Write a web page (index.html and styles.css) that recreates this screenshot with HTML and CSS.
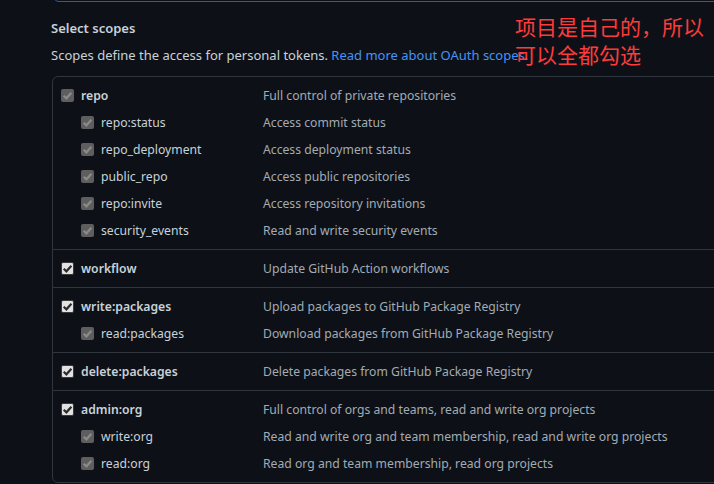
FILE: index.html
```html
<!DOCTYPE html>
<html lang="en">
<head>
<meta charset="utf-8">
<link rel="stylesheet" href="styles.css">
</head>
<body>
<div class="page">
  <div class="input"></div>
  <h3 class="title">Select scopes</h3>
  <p class="note">Scopes define the access for personal tokens. <a href="#">Read more about OAuth scopes.</a></p>
  <div class="box">
    <div class="group">
      <div class="row"><span class="cb dis"><svg viewBox="0 0 12 12"><path d="M2.5 6.2 L5 8.6 L9.6 3.4"/></svg></span><span class="name strong">repo</span><span class="desc">Full control of private repositories</span></div>
      <div class="row child"><span class="cb dis"><svg viewBox="0 0 12 12"><path d="M2.5 6.2 L5 8.6 L9.6 3.4"/></svg></span><span class="name">repo:status</span><span class="desc">Access commit status</span></div>
      <div class="row child"><span class="cb dis"><svg viewBox="0 0 12 12"><path d="M2.5 6.2 L5 8.6 L9.6 3.4"/></svg></span><span class="name">repo_deployment</span><span class="desc">Access deployment status</span></div>
      <div class="row child"><span class="cb dis"><svg viewBox="0 0 12 12"><path d="M2.5 6.2 L5 8.6 L9.6 3.4"/></svg></span><span class="name">public_repo</span><span class="desc">Access public repositories</span></div>
      <div class="row child"><span class="cb dis"><svg viewBox="0 0 12 12"><path d="M2.5 6.2 L5 8.6 L9.6 3.4"/></svg></span><span class="name">repo:invite</span><span class="desc">Access repository invitations</span></div>
      <div class="row child"><span class="cb dis"><svg viewBox="0 0 12 12"><path d="M2.5 6.2 L5 8.6 L9.6 3.4"/></svg></span><span class="name">security_events</span><span class="desc">Read and write security events</span></div>
    </div>
    <div class="group">
      <div class="row"><span class="cb on"><svg viewBox="0 0 12 12"><path d="M2.5 6.2 L5 8.6 L9.6 3.4"/></svg></span><span class="name strong">workflow</span><span class="desc">Update GitHub Action workflows</span></div>
    </div>
    <div class="group">
      <div class="row"><span class="cb on"><svg viewBox="0 0 12 12"><path d="M2.5 6.2 L5 8.6 L9.6 3.4"/></svg></span><span class="name strong">write:packages</span><span class="desc">Upload packages to GitHub Package Registry</span></div>
      <div class="row child"><span class="cb dis"><svg viewBox="0 0 12 12"><path d="M2.5 6.2 L5 8.6 L9.6 3.4"/></svg></span><span class="name">read:packages</span><span class="desc">Download packages from GitHub Package Registry</span></div>
    </div>
    <div class="group">
      <div class="row"><span class="cb on"><svg viewBox="0 0 12 12"><path d="M2.5 6.2 L5 8.6 L9.6 3.4"/></svg></span><span class="name strong">delete:packages</span><span class="desc">Delete packages from GitHub Package Registry</span></div>
    </div>
    <div class="group">
      <div class="row"><span class="cb on"><svg viewBox="0 0 12 12"><path d="M2.5 6.2 L5 8.6 L9.6 3.4"/></svg></span><span class="name strong">admin:org</span><span class="desc">Full control of orgs and teams, read and write org projects</span></div>
      <div class="row child"><span class="cb dis"><svg viewBox="0 0 12 12"><path d="M2.5 6.2 L5 8.6 L9.6 3.4"/></svg></span><span class="name">write:org</span><span class="desc">Read and write org and team membership, read and write org projects</span></div>
      <div class="row child"><span class="cb dis"><svg viewBox="0 0 12 12"><path d="M2.5 6.2 L5 8.6 L9.6 3.4"/></svg></span><span class="name">read:org</span><span class="desc">Read org and team membership, read org projects</span></div>
    </div>
  </div>
  <div class="annot">项目是自己的，所以<br>可以全都勾选</div>
</div>
</body>
</html>
```

FILE: styles.css
```css
html, body {
  margin: 0;
  padding: 0;
  background: #0d1117;
  overflow: hidden;
}
body {
  width: 714px;
  height: 484px;
  font-family: "Noto Sans", "Open Sans", sans-serif;
  color: #c9d1d9;
}
.page {
  position: relative;
  display: flow-root;
  padding-left: 51px;
  height: 484px;
}
.input {
  height: 30px;
  margin-top: -30px;
  margin-left: 2px;
  width: 720px;
  border: 1px solid #2a5aa8;
  border-radius: 6px;
}
.title {
  margin: 0;
  padding-top: 16px;
  font-size: 13px;
  font-weight: 600;
  line-height: 20px;
  color: #c9d1d9;
}
.note {
  margin: 7px 0 0;
  font-size: 13px;
  line-height: 20px;
  color: #c9d1d9;
}
.note a {
  color: #4493f8;
  text-decoration: none;
}
.box {
  margin-top: 11px;
  margin-left: 1px;
  width: 720px;
  border: 1px solid #30363d;
  border-radius: 6px;
}
.group {
  padding: 5px 0 5px 8px;
  border-top: 1px solid #30363d;
}
.group:first-child {
  border-top: 0;
  padding-top: 5px;
}
.row {
  display: flex;
  align-items: center;
  height: 27px;
  font-size: 12.2px;
}
.cb {
  width: 13px;
  height: 13px;
  border-radius: 2px;
  box-sizing: border-box;
  flex: none;
  display: flex;
}
.cb svg {
  width: 13px;
  height: 13px;
  fill: none;
  stroke-width: 2;
}
.cb.on {
  background: #e2e2e2;
  border: 1px solid #3a3a3a;
}
.cb.on svg {
  stroke: #2b2b2b;
  margin: -1px;
}
.cb.dis {
  background: #5e5e5e;
}
.cb.dis svg {
  stroke: #8a8a8a;
}
.name {
  margin-left: 7px;
  width: 182px;
  flex: none;
  color: #c9d1d9;
}
.strong {
  font-weight: 600;
}
.row.child .cb {
  margin-left: 20px;
}
.row.child .name {
  width: 162px;
}
.desc {
  color: #a3abb4;
  white-space: nowrap;
}
.annot {
  position: absolute;
  left: 515px;
  top: 12px;
  font-family: "Noto Sans CJK SC", sans-serif;
  font-size: 21px;
  line-height: 28px;
  color: #ff3a3a;
}
```
